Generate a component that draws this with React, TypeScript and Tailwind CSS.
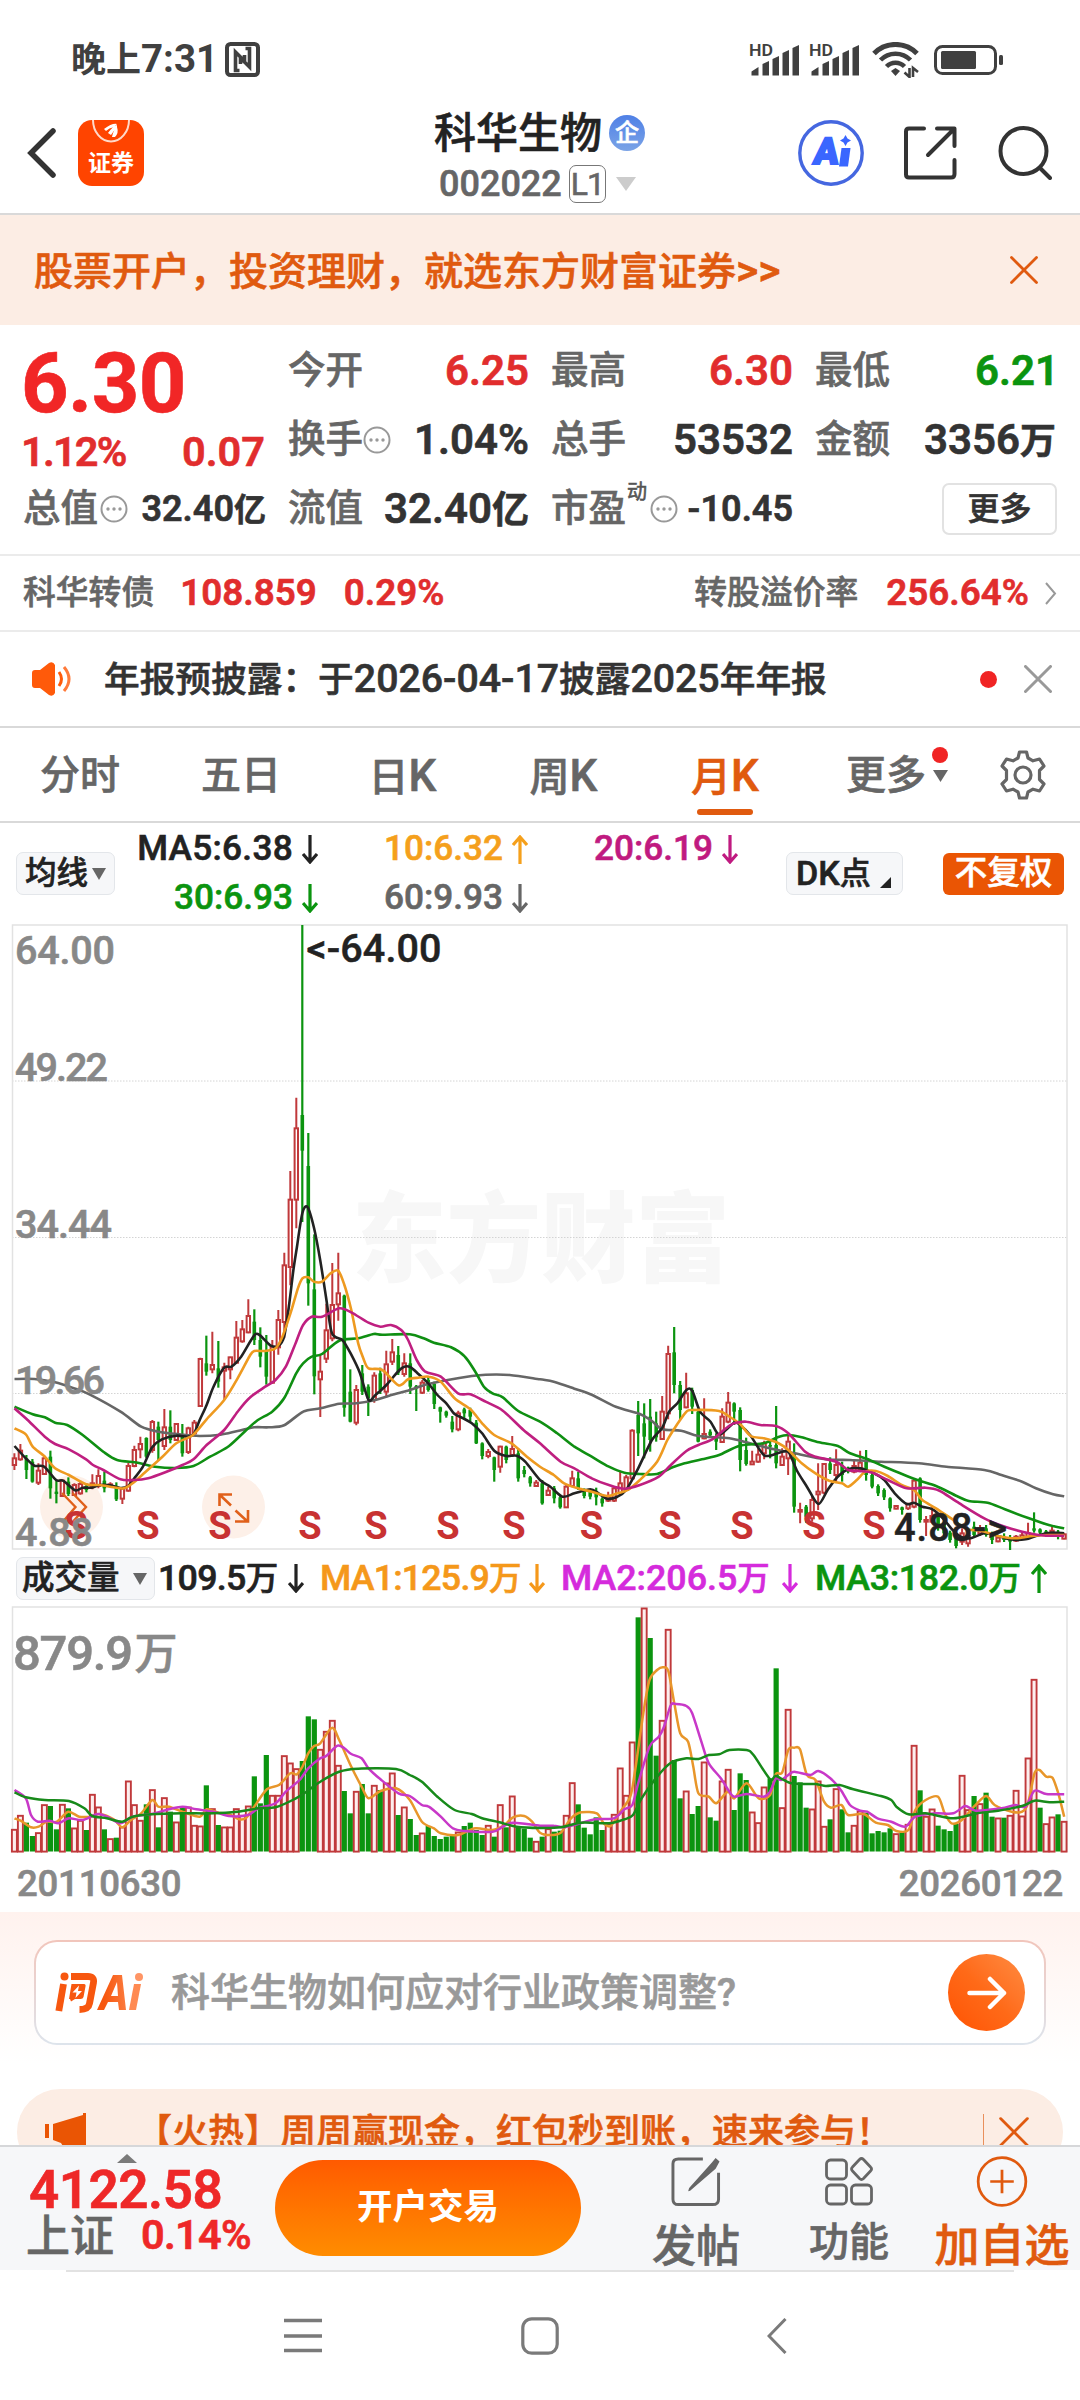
import type { ReactNode } from "react";

type Point = [number, number];
// [direction, high, body top, body bottom, low], prices in thirds of a pixel
type Candle = [1 | 0, number, number, number, number];

const STEP = 5.998;
const FIRST_X = 14.4;
const FRAME = "#e2e2e2";
const UP = "#c0393b";
const DOWN = "#0b940f";

const EARLY: Candle[] = [
  [1, 640, 655, 675, 690], [1, 612, 632, 658, 662], [0, 645, 655, 690, 717], [0, 657, 665, 725, 728],
  [1, 670, 692, 728, 735], [1, 647, 655, 702, 705], [0, 632, 650, 745, 776], [0, 720, 755, 762, 790],
  [1, 718, 722, 768, 770], [0, 712, 725, 762, 768], [1, 730, 735, 765, 768], [1, 722, 732, 760, 764],
  [0, 730, 738, 750, 757], [1, 703, 730, 740, 748], [1, 688, 708, 738, 745], [0, 695, 722, 745, 757],
  [1, 727, 733, 735, 738], [0, 727, 738, 778, 783], [1, 742, 746, 776, 792], [1, 668, 678, 752, 755],
  [1, 617, 630, 678, 682], [1, 590, 612, 628, 655], [0, 592, 594, 650, 654], [1, 540, 546, 630, 638],
  [0, 545, 560, 600, 660], [1, 507, 562, 618, 630], [0, 511, 560, 600, 610], [1, 550, 552, 600, 602],
  [0, 552, 590, 640, 650], [1, 560, 565, 636, 642], [1, 540, 548, 580, 584], [1, 353, 357, 498, 500],
  [0, 287, 370, 395, 407], [1, 275, 375, 388, 400], [0, 303, 385, 425, 443], [1, 368, 382, 392, 480],
  [1, 350, 352, 388, 418], [1, 243, 293, 368, 372], [1, 240, 268, 304, 308], [1, 178, 228, 277, 280],
  [0, 208, 245, 300, 315], [0, 262, 300, 350, 382], [0, 285, 330, 410, 434], [1, 300, 320, 428, 432],
  [1, 210, 240, 322, 344], [1, 38, 76, 246, 295], [1, -207, -121, 81, 136], [1, -427, -335, -121, -35],
  [0, -945, -375, -268, -54], [0, -321, -222, 130, 197], [0, -17, 148, 409, 463], [1, 344, 395, 418, 531],
  [1, 191, 271, 356, 369], [1, 69, 195, 295, 304], [1, 38, 160, 193, 242], [0, 164, 167, 503, 530],
  [0, 388, 455, 545, 547], [1, 435, 450, 548, 556], [0, 375, 400, 455, 465], [0, 433, 440, 475, 528],
  [1, 397, 407, 480, 488], [0, 383, 400, 450, 462], [1, 332, 373, 455, 472], [1, 297, 337, 365, 375],
  [0, 318, 345, 398, 405], [1, 340, 370, 402, 410], [0, 340, 370, 440, 462], [0, 435, 438, 445, 513],
  [1, 420, 428, 458, 462], [0, 408, 420, 450, 455], [0, 425, 432, 492, 507], [0, 500, 502, 515, 548],
  [0, 512, 515, 527, 533], [0, 528, 545, 568, 577], [1, 512, 520, 568, 574], [0, 503, 508, 520, 538],
  [0, 503, 510, 530, 545], [0, 540, 548, 610, 612], [0, 607, 610, 648, 658], [1, 627, 636, 648, 655],
  [0, 650, 652, 690, 725], [1, 617, 620, 680, 698], [0, 617, 620, 660, 670], [1, 588, 627, 645, 650],
  [0, 625, 640, 715, 725], [0, 678, 690, 702, 712], [0, 708, 712, 730, 740], [1, 720, 728, 738, 740],
];

const LATE: Candle[] = [
  [0, 960, 970, 1030, 1034], [1, 980, 992, 1005, 1008], [0, 978, 985, 1015, 1030], [0, 1005, 1012, 1042, 1046],
  [1, 972, 980, 1042, 1044], [1, 932, 955, 978, 982], [0, 935, 955, 985, 990], [0, 985, 990, 1008, 1015],
  [0, 988, 992, 1010, 1018], [0, 983, 995, 1012, 1036], [0, 1012, 1016, 1030, 1040], [1, 995, 1010, 1022, 1026],
  [1, 980, 985, 1022, 1026], [1, 932, 970, 1000, 1004], [1, 945, 952, 990, 993], [1, 808, 812, 955, 960],
  [0, 723, 765, 820, 888], [0, 730, 790, 830, 895], [0, 717, 770, 840, 875], [0, 755, 790, 832, 845],
  [1, 708, 755, 837, 840], [1, 557, 582, 760, 778], [0, 501, 577, 675, 700], [0, 663, 675, 750, 777],
  [1, 638, 700, 742, 745], [0, 683, 690, 740, 762], [0, 750, 755, 845, 847], [1, 715, 822, 835, 838],
  [0, 808, 815, 826, 832], [0, 820, 828, 845, 870], [1, 745, 770, 846, 848], [1, 696, 728, 785, 790],
  [0, 727, 730, 755, 795], [0, 742, 750, 900, 934], [0, 833, 870, 912, 917], [1, 872, 905, 913, 915],
  [1, 865, 884, 905, 908], [1, 842, 850, 880, 898], [0, 845, 855, 860, 895], [0, 738, 855, 910, 925],
  [1, 865, 890, 915, 918], [1, 822, 845, 895, 945], [0, 850, 880, 1040, 1058], [1, 1028, 1050, 1055, 1090],
  [0, 1035, 1040, 1070, 1088], [1, 1008, 1020, 1075, 1085], [1, 910, 995, 1003, 1050], [1, 910, 912, 998, 1003],
  [0, 892, 910, 930, 942], [1, 868, 915, 945, 968], [0, 905, 915, 945, 965], [0, 920, 925, 935, 940],
  [1, 898, 918, 935, 940], [1, 872, 908, 930, 935], [0, 870, 905, 945, 962], [0, 938, 945, 980, 985],
  [0, 973, 978, 1000, 1008], [0, 985, 990, 1012, 1020], [0, 1012, 1015, 1045, 1055], [1, 1036, 1038, 1046, 1048],
  [0, 1040, 1042, 1050, 1064], [1, 1028, 1032, 1045, 1050], [1, 955, 962, 1040, 1045], [0, 952, 955, 1080, 1088],
  [1, 1068, 1080, 1085, 1128], [1, 1040, 1068, 1085, 1090], [0, 1060, 1068, 1105, 1112], [0, 1082, 1088, 1120, 1128],
  [0, 1112, 1118, 1140, 1148], [0, 1125, 1130, 1158, 1165], [1, 1105, 1120, 1145, 1155], [1, 1120, 1128, 1150, 1160],
  [0, 1085, 1100, 1125, 1132], [1, 1095, 1105, 1120, 1128], [0, 1095, 1105, 1125, 1130], [0, 1115, 1120, 1140, 1152],
  [1, 1130, 1133, 1144, 1147], [0, 1120, 1130, 1140, 1146], [0, 1125, 1132, 1145, 1170], [1, 1125, 1130, 1142, 1146],
  [1, 1118, 1126, 1135, 1140], [1, 1088, 1120, 1130, 1135], [0, 1057, 1105, 1112, 1118], [0, 1105, 1108, 1118, 1125],
  [0, 1110, 1114, 1124, 1130], [1, 1100, 1112, 1122, 1128], [0, 1110, 1115, 1130, 1138], [1, 1120, 1123, 1136, 1138],
];

// the late half is measured from a baseline 80px higher
const CANDLES: Candle[] = [
  ...EARLY,
  ...LATE.map(([d, h, t, b, l]): Candle => [d, h - 240, t - 240, b - 240, l - 240]),
];

const VOLUMES = [
  867, 825, 848, 888, 877, 793, 798, 868, 792, 805, 863, 840, 870, 762, 800, 868, 895, 893, 860, 722, 793, 840,
  793, 748, 862, 772, 815, 845, 802, 800, 855, 857, 736, 805, 855, 860, 860, 805, 825, 797, 709, 790, 645, 765,
  765, 646, 668, 685, 663, 529, 538, 627, 573, 540, 675, 753, 820, 753, 732, 820, 735, 750, 728, 698, 825, 800,
  837, 885, 878, 858, 888, 897, 890, 885, 875, 858, 848, 870, 885, 855, 890, 793, 862, 767, 862, 866, 893, 903,
  890, 865, 875, 872, 825, 727, 793, 863, 883, 832, 870, 850, 822, 683, 765, 605, 232, 203, 294, 647, 540, 267,
  660, 775, 752, 822, 798, 665, 832, 842, 722, 687, 810, 700, 720, 815, 847, 740, 715, 385, 802, 507, 708, 727,
  803, 806, 722, 858, 838, 745, 808, 877, 855, 812, 818, 880, 873, 877, 865, 880, 873, 852, 615, 751, 828, 806,
  857, 868, 873, 852, 705, 808, 768, 790, 758, 830, 833, 833, 825, 750, 827, 653, 417, 803, 850, 830, 823, 843,
];
const VOLUME_FLIPPED = new Set([105, 131, 166, 170, 172]);

const join = (left: Point[], right: Point[]): Point[] => [
  ...left,
  ...right.map(([x, y]): Point => [x + 1568, y]),
];
const raise = (points: Point[]): Point[] => points.map(([x, y]) => [x, y - 240]);

const MA_LINES: { color: string; points: Point[] }[] = [
  {
    color: "#666666",
    points: join(
      [[42, 417], [100, 417], [160, 427], [210, 443], [260, 463], [350, 515], [410, 560], [460, 575], [520, 583], [580, 588], [640, 584], [690, 573], [738, 562], [780, 562], [825, 556], [880, 515], [930, 505], [985, 491], [1035, 490], [1090, 480], [1130, 467], [1180, 453], [1240, 433], [1300, 420], [1370, 408], [1410, 404], [1480, 405]],
      raise([[0, 658], [40, 665], [100, 686], [150, 704], [220, 740], [290, 762], [325, 783], [355, 808], [410, 812], [460, 828], [550, 835], [610, 850], [680, 868], [740, 880], [830, 898], [900, 900], [990, 905], [1100, 910], [1180, 920], [1290, 930], [1340, 945], [1400, 965], [1440, 985], [1490, 1003], [1522, 1009]]),
    ),
  },
  {
    color: "#0f8f12",
    points: join(
      [[42, 500], [95, 523], [130, 532], [160, 548], [195, 555], [240, 585], [300, 635], [340, 660], [400, 668], [450, 680], [510, 684], [562, 678], [610, 650], [660, 622], [700, 585], [745, 543], [790, 515], [825, 475], [860, 400], [880, 370], [905, 350], [935, 342], [985, 302], [1040, 295], [1085, 282], [1110, 284], [1190, 283], [1230, 295], [1260, 308], [1310, 322], [1350, 350], [1380, 395], [1405, 440], [1430, 460], [1460, 472], [1505, 513]],
      raise([[0, 785], [50, 820], [100, 860], [150, 890], [200, 920], [245, 938], [290, 942], [340, 942], [385, 922], [420, 910], [470, 898], [520, 885], [580, 857], [650, 850], [690, 832], [721, 825], [760, 832], [810, 847], [865, 858], [900, 880], [950, 897], [1000, 920], [1090, 958], [1150, 978], [1210, 1008], [1245, 1023], [1300, 1028], [1350, 1048], [1420, 1075], [1480, 1096], [1522, 1105]]),
    ),
  },
  {
    color: "#222222",
    points: join(
      [[42, 618], [75, 655], [100, 677], [128, 680], [163, 720], [183, 722], [218, 751], [240, 743], [265, 743], [290, 735], [320, 736], [350, 744], [372, 738], [390, 715], [415, 680], [442, 622], [470, 598], [512, 587], [545, 590], [562, 583], [580, 540], [600, 495], [620, 440], [651, 383], [672, 380], [700, 350], [738, 286], [755, 286], [785, 316], [808, 318], [825, 290], [840, 190], [852, 90], [862, 22], [878, -81], [893, -99], [912, -35], [930, 62], [947, 173], [964, 280], [995, 301], [1020, 344], [1045, 399], [1070, 479], [1090, 465], [1122, 435], [1157, 393], [1174, 380], [1191, 381], [1215, 402], [1245, 432], [1270, 465], [1296, 490], [1320, 522], [1345, 535], [1370, 550], [1400, 580], [1435, 632], [1470, 648], [1500, 647], [1525, 665]],
      raise([[0, 960], [30, 980], [65, 1010], [100, 1000], [146, 988], [170, 1000], [195, 1016], [225, 1010], [250, 990], [285, 925], [325, 840], [355, 803], [375, 755], [400, 728], [425, 690], [442, 692], [465, 755], [495, 785], [515, 820], [529, 820], [564, 788], [581, 795], [610, 825], [651, 886], [690, 880], [721, 875], [745, 930], [775, 980], [808, 1032], [835, 990], [862, 953], [895, 928], [930, 925], [970, 940], [1000, 960], [1030, 1000], [1065, 1032], [1086, 1028], [1110, 1040], [1140, 1048], [1170, 1075], [1200, 1112], [1225, 1132], [1250, 1135], [1290, 1120], [1320, 1125], [1365, 1138], [1410, 1138], [1440, 1128], [1480, 1118], [1522, 1120]]),
    ),
  },
  {
    color: "#ee9a20",
    points: join(
      [[42, 565], [75, 583], [95, 620], [128, 648], [160, 685], [200, 705], [250, 733], [290, 735], [330, 742], [360, 745], [385, 730], [420, 698], [470, 652], [512, 610], [560, 585], [600, 538], [651, 480], [690, 415], [725, 348], [738, 333], [770, 333], [800, 325], [820, 290], [845, 215], [865, 145], [878, 115], [895, 112], [912, 125], [935, 125], [960, 100], [982, 92], [1000, 135], [1020, 210], [1040, 310], [1055, 355], [1070, 385], [1110, 390], [1157, 436], [1185, 418], [1215, 413], [1245, 410], [1280, 425], [1320, 475], [1366, 508], [1400, 550], [1435, 585], [1485, 610], [1530, 650]],
      raise([[0, 920], [40, 945], [70, 970], [110, 985], [150, 995], [195, 1008], [225, 1000], [255, 990], [290, 960], [340, 905], [370, 840], [400, 790], [425, 755], [442, 750], [520, 753], [550, 770], [581, 792], [612, 828], [650, 835], [690, 848], [721, 870], [760, 910], [800, 940], [840, 962], [877, 970], [895, 980], [920, 960], [945, 935], [975, 933], [1010, 948], [1050, 975], [1086, 990], [1110, 1020], [1150, 1045], [1200, 1080], [1240, 1108], [1280, 1112], [1330, 1128], [1380, 1135], [1430, 1128], [1480, 1125], [1522, 1125]]),
    ),
  },
  {
    color: "#bf1f80",
    points: join(
      [[42, 505], [80, 540], [130, 590], [160, 612], [200, 628], [250, 658], [270, 675], [300, 690], [350, 718], [390, 720], [430, 715], [480, 697], [530, 675], [562, 658], [600, 615], [651, 570], [690, 515], [725, 473], [770, 440], [800, 420], [830, 380], [860, 305], [880, 255], [905, 230], [935, 230], [985, 205], [1020, 217], [1070, 248], [1105, 260], [1135, 255], [1165, 270], [1185, 300], [1210, 360], [1235, 395], [1280, 410], [1330, 460], [1366, 463], [1410, 485], [1460, 512], [1520, 570]],
      raise([[0, 850], [60, 905], [100, 925], [150, 955], [200, 975], [245, 986], [290, 975], [345, 950], [380, 915], [425, 873], [460, 855], [500, 838], [540, 805], [564, 790], [600, 785], [640, 795], [685, 798], [721, 820], [770, 875], [800, 890], [860, 905], [895, 930], [925, 933], [965, 938], [1010, 960], [1065, 985], [1120, 983], [1160, 992], [1210, 1025], [1290, 1075], [1350, 1100], [1420, 1120], [1470, 1127], [1522, 1127]]),
    ),
  },
];

const VOLUME_LINES: { color: string; points: Point[] }[] = [
  {
    color: "#e8962a",
    points: join(
      [[42, 835], [60, 842], [90, 862], [112, 860], [135, 845], [165, 845], [198, 815], [230, 830], [262, 830], [290, 822], [330, 838], [355, 862], [380, 840], [410, 820], [442, 780], [460, 800], [490, 800], [530, 815], [580, 830], [600, 808], [635, 818], [665, 822], [695, 838], [715, 833], [738, 800], [775, 748], [810, 735], [843, 700], [862, 703], [878, 680], [895, 640], [912, 618], [930, 610], [964, 563], [985, 600], [1020, 680], [1050, 740], [1070, 775], [1105, 753], [1150, 745], [1190, 780], [1225, 845], [1260, 865], [1280, 880], [1330, 885], [1380, 865], [1430, 870], [1465, 855], [1490, 832], [1522, 828], [1545, 845]],
      [[0, 878], [30, 885], [60, 878], [90, 835], [120, 817], [165, 820], [185, 850], [205, 858], [233, 815], [262, 770], [275, 700], [300, 520], [318, 420], [340, 390], [358, 382], [373, 395], [390, 490], [407, 580], [430, 605], [445, 680], [460, 760], [490, 770], [512, 790], [545, 755], [564, 775], [600, 730], [635, 775], [668, 765], [685, 702], [703, 698], [721, 630], [738, 623], [755, 628], [775, 705], [800, 720], [825, 785], [845, 803], [875, 795], [895, 825], [940, 822], [975, 848], [1010, 855], [1035, 873], [1070, 870], [1090, 810], [1120, 780], [1156, 770], [1175, 820], [1195, 850], [1225, 840], [1260, 800], [1295, 768], [1320, 795], [1370, 815], [1400, 815], [1417, 790], [1436, 700], [1450, 690], [1470, 710], [1488, 713], [1505, 760], [1522, 830]],
    ),
  },
  {
    color: "#c838c8",
    points: join(
      [[42, 750], [75, 775], [90, 825], [110, 845], [145, 842], [170, 850], [200, 835], [240, 840], [285, 822], [320, 835], [350, 850], [385, 830], [440, 822], [490, 808], [530, 800], [570, 808], [620, 815], [665, 828], [720, 825], [750, 805], [800, 790], [830, 755], [870, 720], [895, 685], [930, 655], [947, 648], [980, 617], [1000, 625], [1020, 642], [1050, 655], [1070, 685], [1105, 718], [1157, 760], [1190, 768], [1225, 795], [1245, 800], [1280, 830], [1315, 865], [1350, 873], [1430, 875], [1460, 860], [1490, 848]],
      [[0, 857], [40, 857], [70, 862], [110, 852], [160, 838], [215, 835], [245, 808], [268, 795], [285, 730], [318, 620], [345, 590], [360, 560], [380, 495], [395, 492], [425, 498], [442, 520], [470, 610], [490, 670], [525, 715], [550, 755], [564, 770], [600, 762], [650, 770], [668, 755], [685, 715], [700, 720], [721, 705], [738, 695], [785, 705], [808, 693], [843, 715], [875, 752], [900, 795], [930, 812], [950, 815], [980, 835], [1020, 845], [1060, 860], [1090, 830], [1150, 820], [1200, 820], [1235, 798], [1265, 812], [1340, 805], [1380, 795], [1410, 800], [1436, 752], [1470, 762], [1522, 763]],
    ),
  },
  {
    color: "#178a1a",
    points: join(
      [[42, 757], [75, 772], [130, 780], [200, 783], [245, 805], [268, 828], [310, 835], [355, 845], [385, 830], [440, 823], [530, 820], [620, 820], [690, 815], [750, 805], [800, 802], [850, 780], [890, 755], [930, 725], [985, 695], [1040, 686], [1150, 687], [1190, 705], [1225, 725], [1270, 770], [1320, 810], [1370, 822], [1400, 835], [1450, 847], [1500, 860]],
      [[0, 864], [60, 862], [120, 848], [200, 850], [245, 838], [270, 825], [295, 775], [340, 710], [380, 668], [425, 655], [460, 657], [490, 645], [520, 643], [550, 630], [600, 630], [620, 645], [668, 718], [685, 708], [730, 730], [800, 732], [830, 738], [870, 735], [910, 748], [990, 768], [1020, 780], [1035, 800], [1070, 823], [1120, 820], [1200, 835], [1270, 820], [1330, 812], [1400, 798], [1436, 782], [1480, 787], [1522, 785]],
    ),
  },
];

// Catmull-Rom spline through the samples, mapped to pixels
function smooth(samples: Point[], baseY: number) {
  const p = samples.map(([x, y]): Point => [x / 2.9037, baseY + y / 3]);
  let d = `M${p[0][0].toFixed(1)} ${p[0][1].toFixed(1)}`;
  for (let i = 0; i < p.length - 1; i++) {
    const a = p[i - 1] ?? p[i];
    const b = p[i];
    const c = p[i + 1];
    const e = p[i + 2] ?? c;
    const k = 7;
    d += `C${(b[0] + (c[0] - a[0]) / k).toFixed(1)} ${(b[1] + (c[1] - a[1]) / k).toFixed(1)} ${(c[0] - (e[0] - b[0]) / k).toFixed(1)} ${(c[1] - (e[1] - b[1]) / k).toFixed(1)} ${c[0].toFixed(1)} ${c[1].toFixed(1)}`;
  }
  return d;
}

// Latin runs are set slightly larger than the Han glyphs around them
function Mix({ children }: { children: string }) {
  return (
    <>
      {children.split(/([\x21-\x7e]+)/).map((part, i) =>
        i % 2 ? <span key={i} className="text-[1.1em] leading-none">{part}</span> : part,
      )}
    </>
  );
}

function Arrow({ up = false }: { up?: boolean }) {
  return (
    <svg width="16" height="29" viewBox="0 0 16 29" fill="none" stroke="currentColor" strokeWidth="3.200" className="shrink-0">
      {up ? <path d="M8 29V3M1 10l7-8 7 8" /> : <path d="M8 0v26M1 19l7 8 7-8" />}
    </svg>
  );
}

function Cross({ size, className, width = 3 }: { size: number; className: string; width?: number }) {
  return (
    <svg width={size} height={size} viewBox="0 0 28 28" fill="none" stroke="currentColor" strokeWidth={width} strokeLinecap="round" className={className}>
      <path d="M1.5 1.5l25 25M26.5 1.5l-25 25" />
    </svg>
  );
}

function Dots() {
  return (
    <svg width="28" height="28" viewBox="0 0 28 28" className="shrink-0">
      <circle cx="14" cy="14" r="12.5" fill="none" stroke="#999" strokeWidth="2" />
      <circle cx="8" cy="14" r="1.7" fill="#999" />
      <circle cx="14" cy="14" r="1.7" fill="#999" />
      <circle cx="20" cy="14" r="1.7" fill="#999" />
    </svg>
  );
}

function Signal() {
  return (
    <svg width="51" height="34" viewBox="0 0 51 34" fill="#404040">
      <text x="0" y="12.5" fontSize="16.5" fontWeight="600" textLength="24" lengthAdjust="spacingAndGlyphs">HD</text>
      <path d="M2.500 32.500v-4l7-4.500v8.500zM13.500 32.500V21l6.500-3v14.500zM23.500 32.500V16l6.500-3v19.500zM33.500 32.500V10l6.500-3v25.500zM43.500 32.500V5l6.500-3v30.500z" />
    </svg>
  );
}

function StatusBar() {
  return (
    <div className="flex h-[93px] items-center pt-[26px] pr-[76px] pl-[71px] text-[#404040]">
      <span className="text-[35px] font-bold leading-none [-webkit-text-stroke:0px]">
        <Mix>晚上7:31</Mix>
      </span>
      <svg width="35" height="35" viewBox="0 0 35 35" fill="none" stroke="currentColor" className="ml-[7px]">
        <rect x="2" y="2" width="31" height="31" rx="3.500" strokeWidth="4" />
        <path d="M14.500 28.500h-4V10q6 6 9 9v-6M20.500 6.500h4V25q-6-6-9-9v6" strokeWidth="3.600" />
      </svg>
      <div className="ml-auto flex items-center">
        <Signal />
        <span className="w-[9px]" />
        <Signal />
        <svg width="47" height="36" viewBox="0 0 47 36" fill="none" stroke="currentColor" className="ml-[12px]">
          <path d="M2 11.500a30 30 0 0 1 43 0" strokeWidth="5" />
          <path d="M8.500 18a21 21 0 0 1 30 0" strokeWidth="4.600" />
          <path d="M14.500 24.500a12.500 12.500 0 0 1 18 0" strokeWidth="4.500" />
          <path d="M19 29l4.500-3 4.500 3-4.500 5z" fill="currentColor" stroke="none" />
          <path d="M37.500 26v9l-5-4.500M41 35v-9l5 4" strokeWidth="2.600" />
        </svg>
        <svg width="70" height="30" viewBox="0 0 70 30" className="ml-[15px]">
          <rect x="1.500" y="1.500" width="60" height="27" rx="7" fill="none" stroke="#404040" strokeWidth="3" />
          <rect x="7" y="6" width="35" height="18" rx="1.500" fill="#404040" />
          <rect x="65" y="10" width="4" height="10" rx="1.500" fill="#404040" />
        </svg>
      </div>
    </div>
  );
}

function Header() {
  return (
    <header className="flex h-[122px] items-center border-b-2 border-[#d9d9d9] pr-[28px] pl-[26px]">
      <svg width="32" height="52" viewBox="0 0 32 52" fill="none" stroke="#333" strokeWidth="5.500" strokeLinecap="round" strokeLinejoin="miter">
        <path d="M27 4L5 26l22 22" />
      </svg>
      <div className="relative ml-[20px] flex size-[66px] items-end justify-center overflow-hidden rounded-[14px] bg-[#ff4400]">
        <svg width="66" height="66" viewBox="0 0 66 66" fill="none" className="absolute inset-0">
          <path d="M15 0a18 21.500 0 0 0 36 0" stroke="#ffd9c9" strokeWidth="2" />
          <path d="M26 9q8-6 13-5l-3 3q-5 1-8 4zM30 13q4-6 9-8v3q-4 3-6 7zM34 17q1-6 5-10 2 6-2 10z" fill="#fff" />
        </svg>
        <span className="mb-[8px] text-[23px] font-bold leading-[28px] text-white [-webkit-text-stroke:0px]">证券</span>
      </div>
      <div className="ml-[290px] flex w-[216px] flex-col pt-[6px]">
        <div className="flex items-center gap-[7px]">
          <span className="text-[42px] font-medium leading-[48px] text-[#222]">科华生物</span>
          <span className="-mt-[2px] flex size-[36px] items-center justify-center rounded-full bg-gradient-to-b from-[#4f80e6] to-[#7ba3e6] text-[24px] font-medium leading-none text-white">企</span>
        </div>
        <div className="mt-[7px] flex items-center pl-[5px] text-[36px] leading-none text-[#666]">
          <span className="font-medium">002022</span>
          <span className="ml-[7px] flex h-[38px] w-[37px] items-center justify-center rounded-[7px] border-[1.500px] border-[#777] text-[32px] tracking-[-1px]">L1</span>
          <svg width="20" height="14" viewBox="0 0 20 14" fill="#ccc" className="ml-[10px]">
            <path d="M0 0h20L10 14z" />
          </svg>
        </div>
      </div>
      <div className="ml-auto flex items-center">
        <svg width="66" height="66" viewBox="0 0 66 66">
          <circle cx="33" cy="33" r="31.200" fill="none" stroke="#4567e0" strokeWidth="3.400" />
          <text x="15" y="44.500" fontSize="37" fontWeight="900" fill="#3a66ff" stroke="#3a66ff" strokeWidth="2" transform="translate(5 0) skewX(-7)" textLength="25" lengthAdjust="spacingAndGlyphs">A</text>
          <path d="M43.500 28h9l-2.500 18.500h-9z" fill="#3a66ff" />
          <path d="M47.500 15l2 3.500 3.500 2-3.500 2-2 3.500-2-3.500-3.500-2 3.500-2z" fill="#3a66ff" />
        </svg>
        <svg width="54" height="54" viewBox="0 0 54 54" fill="none" stroke="#333" strokeWidth="4" strokeLinecap="round" strokeLinejoin="round" className="ml-[39px]">
          <path d="M21 2.500H6Q3 2.500 3 5.500v43Q3 51.500 6 51.500h42Q51.500 51.500 51.500 48V34M34 2.500h17.500V20M50 4L25 29" />
        </svg>
        <svg width="54" height="54" viewBox="0 0 54 54" fill="none" stroke="#333" strokeWidth="4" strokeLinecap="round" className="ml-[41px]">
          <circle cx="25.500" cy="25" r="23" />
          <path d="M42 42l10 10" />
        </svg>
      </div>
    </header>
  );
}

function Stat({ label, value, color = "text-[#333]", size = "text-[42px]", children }: { label: string; value: ReactNode; color?: string; size?: string; children?: ReactNode }) {
  return (
    <div className="flex h-[69px] items-center whitespace-nowrap leading-none">
      <span className="-ml-px text-[37.500px] font-medium text-[#666]">{label}</span>
      {children}
      <span className={`-mr-[2px] ml-auto font-semibold ${size} ${color}`}>{value}</span>
    </div>
  );
}

function Quote() {
  const red = "text-[#e12d2d]";
  return (
    <section className="h-[231px] border-b-2 border-[#ebebeb] px-[24px] pt-[11px]">
      <div className="grid grid-cols-[240px_238px_239px_238px] gap-x-[25px]">
        <div className="row-span-2 flex flex-col whitespace-nowrap leading-none">
          <div className="-ml-[3px] flex h-[94px] items-center text-[83px] font-bold tracking-[-0.500px] text-[#f12626]">6.30</div>
          <div className="flex h-[44px] items-center justify-between text-[41.500px] font-semibold text-[#e12d2d]">
            <span className="-ml-[3px] tracking-[-1.800px]">1.12%</span>
            <span className="-mr-px">0.07</span>
          </div>
        </div>
        <Stat label="今开" value="6.25" color={red} />
        <Stat label="最高" value="6.30" color={red} />
        <Stat label="最低" value="6.21" color="mr-[-5px] text-[#0b940f]" />
        <Stat label="换手" value="1.04%">
          <Dots />
        </Stat>
        <Stat label="总手" value="53532" />
        <Stat label="金额" value={<>3356<span className="text-[36px]">万</span></>} />
        <Stat label="总值" size="text-[36px]" value={<>32.40<span className="text-[32px]">亿</span></>}>
          <span className="ml-[2px] flex"><Dots /></span>
        </Stat>
        <Stat label="流值" value={<>32.40<span className="text-[37px]">亿</span></>} />
        <Stat label="市盈" size="text-[36px]" value="-10.45">
          <span className="-mt-[34px] ml-[1px] text-[20px] text-[#555]">动</span>
          <span className="ml-[3px] flex"><Dots /></span>
        </Stat>
        <div className="flex items-center justify-end">
          <div className="-mr-[3px] flex h-[52px] w-[115px] items-center justify-center rounded-[7px] border-2 border-[#e2e2e2] text-[32px] font-medium leading-none text-[#333]">更多</div>
        </div>
      </div>
    </section>
  );
}

function BondRow() {
  return (
    <div className="flex h-[76px] items-center whitespace-nowrap border-b-2 border-[#ebebeb] pr-[23px] pl-[23px] leading-none">
      <span className="text-[32.800px] font-medium text-[#666]">科华转债</span>
      <span className="ml-[26px] text-[36.800px] font-semibold text-[#e12d2d]">108.859</span>
      <span className="ml-[27px] text-[36.800px] font-semibold text-[#e12d2d]">0.29%</span>
      <span className="ml-auto text-[32.800px] font-medium text-[#666]">转股溢价率</span>
      <span className="ml-[28px] text-[36.800px] font-semibold text-[#e12d2d]">256.64%</span>
      <svg width="12" height="23" viewBox="0 0 12 23" fill="none" stroke="#999" strokeWidth="2" className="ml-[16px]">
        <path d="M1 1l9 10.500L1 22" />
      </svg>
    </div>
  );
}

function Notice() {
  return (
    <div className="flex h-[96px] items-center border-b-2 border-[#d9d9d9] pr-[28px] pl-[31px]">
      <svg width="42" height="34" viewBox="0 0 42 34" fill="none">
        <path d="M1 11q0-3 3-3h5l9-7q4-2 6 2v28q-2 4-6 2l-9-7H4q-3 0-3-3z" fill="#ff5a0a" />
        <path d="M28 10q5 7 0 14" stroke="#ff5a0a" strokeWidth="3" />
        <path d="M33 5q10 12 0 24" stroke="#ff7a3a" strokeWidth="3" />
      </svg>
      <span className="mt-px ml-[31px] whitespace-nowrap text-[35.700px] font-medium leading-none text-[#333]">
        <Mix>年报预披露：于2026-04-17披露2025年年报</Mix>
      </span>
      <span className="ml-auto size-[17px] rounded-full bg-[#f02424]" />
      <Cross size={28} width={3} className="ml-[27px] text-[#999]" />
    </div>
  );
}

const TABS = [
  { label: "分时", width: "w-[160px]" },
  { label: "五日", width: "w-[162px]" },
  { label: "日K", width: "w-[161px]" },
  { label: "周K", width: "w-[161px]" },
  { label: "月K", width: "w-[162px]", active: true },
];

function Tabs() {
  return (
    <nav className="flex h-[95px] items-center border-b-2 border-[#d9d9d9] text-[40px] font-medium leading-none text-[#666]">
      {TABS.map((tab) => (
        <div key={tab.label} className={`relative flex h-full items-center justify-center ${tab.width} ${tab.active ? "text-[#e05a0f]" : ""}`}>
          <span className="mt-[2px]"><Mix>{tab.label}</Mix></span>
          {tab.active && <span className="absolute bottom-[6px] h-[6px] w-[56px] rounded-full bg-[#e05a0f]" />}
        </div>
      ))}
      <div className="relative mt-[2px] ml-[40px] flex items-center">
        <span>更多</span>
        <svg width="15" height="12" viewBox="0 0 15 12" fill="#666" className="ml-[7px]">
          <path d="M0 0h15L7.500 12z" />
        </svg>
        <span className="absolute -top-[9px] right-0 size-[16px] rounded-full bg-[#f02424]" />
      </div>
      <svg width="48" height="50" viewBox="0 0 48 50" fill="none" stroke="#666" strokeWidth="3.200" strokeLinejoin="round" className="ml-[51px]">
        <path d="M20.500 2h7l1.500 6 5 2.800 6.500-1.800 4.500 7-4.500 4.500v9l4.500 4.500-4.500 7-6.500-1.800-5 2.800-1.500 6h-7l-1.500-6-5-2.800L7.500 41 3 34l4.500-4.500v-9L3 16l4.500-7 6.500 1.800L19 8z" />
        <circle cx="24" cy="25" r="8" />
      </svg>
    </nav>
  );
}

function Ma({ text, up, className }: { text: string; up?: boolean; className: string }) {
  return (
    <div className={`flex items-center justify-end gap-[9px] ${className}`}>
      <span>{text}</span>
      <Arrow up={up} />
    </div>
  );
}

function Averages() {
  return (
    <div className="flex h-[101px] items-center pr-[16px] pl-[16px]">
      <div className="flex h-[43px] w-[99px] items-center gap-[4px] rounded-[7px] border-[1.500px] border-[#e3e6ea] bg-[#f6f7f9] pl-[8px] text-[31.500px] font-medium leading-none whitespace-nowrap text-[#222]">
        均线
        <svg width="14" height="12" viewBox="0 0 14 12" fill="#666" className="shrink-0"><path d="M0 0h14L7 12z" /></svg>
      </div>
      <div className="grid grid-cols-[203px_210px_210px] grid-rows-[49px_49px] text-[35.200px] font-medium leading-none">
        <Ma text="MA5:6.38" className="tracking-[0.300px] text-[#222]" />
        <Ma text="10:6.32" up className="text-[#f5a01c]" />
        <Ma text="20:6.19" className="text-[#c01a80]" />
        <Ma text="30:6.93" className="text-[#0b940f]" />
        <Ma text="60:9.93" className="text-[#666]" />
      </div>
      <div className="ml-[48px] flex h-[43px] w-[117px] items-center rounded-[7px] border-[1.500px] border-[#e3e6ea] bg-[#f6f7f9] pl-[9px] text-[31px] font-medium leading-none whitespace-nowrap text-[#222]">
        <Mix>DK点</Mix>
        <svg width="11" height="11" viewBox="0 0 11 11" className="mt-[18px] ml-[9px] shrink-0"><path d="M11 0v11H0z" fill="#222" /></svg>
      </div>
      <div className="ml-auto flex h-[42px] w-[121px] items-center justify-center rounded-[6px] bg-[#ea5504] text-[32.500px] font-medium leading-none whitespace-nowrap text-white">不复权</div>
    </div>
  );
}

const AXIS: { label: string; y: number; width: number }[] = [
  { label: "64.00", y: 964, width: 98 },
  { label: "49.22", y: 1081, width: 91 },
  { label: "34.44", y: 1237.5, width: 95 },
  { label: "19.66", y: 1393.5, width: 88 },
  { label: "4.88", y: 1545.5, width: 76 },
];
const MARKS = [76, 148, 220, 310, 376, 448, 514, 591.5, 670, 742, 814, 874];

function PriceChart() {
  return (
    <svg width="1080" height="627" viewBox="0 924 1080 627" fill="none" className="block">
      <text x="352" y="1274" fontSize="98" fontWeight="900" fill="#f7f7f7" textLength="378" lengthAdjust="spacingAndGlyphs">东方财富</text>
      {[1081, 1237.5, 1393.5].map((y) => (
        <path key={y} d={`M12 ${y}H1067`} stroke="#d4d4d4" strokeDasharray="1.500 1.500" />
      ))}
      <rect x="12.500" y="925" width="1054.500" height="624" stroke={FRAME} strokeWidth="1.500" />
      <circle cx="71.500" cy="1507" r="31.500" fill="#fdf0e8" />
      <circle cx="233.500" cy="1507" r="31.500" fill="#fdf0e8" />
      {CANDLES.map(([up, high, top, bottom, low], i) => {
        const x = FIRST_X + i * STEP;
        const y = (v: number) => 1240 + v / 3;
        const height = Math.max((bottom - top) / 3, 1.5);
        return up ? (
          <g key={i} stroke={UP} strokeWidth="2">
            <path d={`M${x} ${y(high)}V${y(top)}M${x} ${y(bottom)}V${y(low)}`} />
            <rect x={x - 1.7} y={y(top)} width="3.400" height={height} fill="#fff" />
          </g>
        ) : (
          <g key={i}>
            <path d={`M${x} ${y(high)}V${y(low)}`} stroke={DOWN} strokeWidth="2.200" />
            <rect x={x - 1.8} y={y(top)} width="3.600" height={height} fill={DOWN} />
          </g>
        );
      })}
      {MA_LINES.map((line) => (
        <path key={line.color} d={smooth(line.points, 1240)} stroke={line.color} strokeWidth="2.600" strokeLinejoin="round" />
      ))}
      <path d="M62 1493l13.500 14-12 14M72.500 1493l13.500 14-12.500 14" stroke="#e0601a" strokeWidth="2.400" />
      <path d="M232 1494.500h-12.500V1506M220 1495l11 10.500M235 1521.500h13V1510M247 1521l-11.500-10.500" stroke="#e0601a" strokeWidth="2.600" />
      {MARKS.map((x) => (
        <text key={x} x={x} y="1538.500" fontSize="38" fontWeight="700" fill="#c83232" textAnchor="middle">S</text>
      ))}
      {AXIS.map((a) => (
        <text key={a.label} x="15" y={a.y} fontSize="39.500" fontWeight="500" fill="#888" stroke="#888" strokeWidth=".6" textLength={a.width + 2}>{a.label}</text>
      ))}
      <text x="306.500" y="961.500" fontSize="39.500" fontWeight="500" fill="#222" stroke="#222" strokeWidth=".5" textLength="135">&lt;-64.00</text>
      <text x="894" y="1541" fontSize="38" fontWeight="500" fill="#222" stroke="#222" strokeWidth=".5" textLength="113">4.88-&gt;</text>
    </svg>
  );
}

function VolumeHeader() {
  return (
    <div className="flex h-[55px] items-center pl-[16px] text-[32.500px] font-medium leading-none whitespace-nowrap">
      <div className="flex h-[43px] w-[139px] items-center justify-between rounded-[7px] border-[1.500px] border-[#e3e6ea] bg-[#f6f7f9] pr-[7px] pl-[5px] text-[32.500px] text-[#222]">
        成交量
        <svg width="14" height="12" viewBox="0 0 14 12" fill="#666"><path d="M0 0h14L7 12z" /></svg>
      </div>
      <div className="ml-[3px] flex w-[146px] items-center justify-between tracking-[-0.700px] text-[#222]"><span><Mix>109.5万</Mix></span><Arrow /></div>
      <div className="ml-[16px] flex w-[225px] items-center justify-between tracking-[-0.800px] text-[#f5981a]"><span><Mix>MA1:125.9万</Mix></span><Arrow /></div>
      <div className="ml-[16px] flex w-[237px] items-center justify-between text-[#d52bdc]"><span><Mix>MA2:206.5万</Mix></span><Arrow /></div>
      <div className="ml-[17px] flex w-[232px] items-center justify-between tracking-[-0.300px] text-[#0b940f]"><span><Mix>MA3:182.0万</Mix></span><Arrow up /></div>
    </div>
  );
}

function VolumeChart() {
  return (
    <svg width="1080" height="247" viewBox="0 1606 1080 247" fill="none" className="block">
      <path d="M12.500 1852V1607H1067v245" stroke={FRAME} strokeWidth="1.500" />
      <text x="13" y="1669.500" fontSize="49" fontWeight="500" fill="#888" stroke="#888" strokeWidth=".6" textLength="120">879.9</text>
      <text x="134.500" y="1669" fontSize="43" fontWeight="500" fill="#888" stroke="#888" strokeWidth=".6">万</text>
      {VOLUMES.map((v, i) => {
        const x = FIRST_X + i * STEP;
        const top = 1540 + v / 3;
        const up = (CANDLES[i][0] === 1) !== VOLUME_FLIPPED.has(i);
        return up ? (
          <rect key={i} x={x - 2.5} y={top + 0.8} width="5" height={1850.8 - top} fill="#fdeeee" stroke={UP} strokeWidth="1.900" />
        ) : (
          <rect key={i} x={x - 2.6} y={top} width="5.200" height={1851.5 - top} fill={DOWN} />
        );
      })}
      {VOLUME_LINES.map((line) => (
        <path key={line.color} d={smooth(line.points, 1540)} stroke={line.color} strokeWidth="2.500" strokeLinejoin="round" />
      ))}
    </svg>
  );
}

function AskAi() {
  return (
    <div className="mx-[34px] mt-[28px] rounded-[23px] bg-gradient-to-b from-[#f1c5bb] to-[#dde4ec] p-[2px]">
      <div className="flex h-[101px] items-center rounded-[21px] bg-white pr-[19px] pl-[19px]">
        <svg width="90" height="42" viewBox="0 0 90 42">
          <defs>
            <linearGradient id="ask" gradientUnits="userSpaceOnUse" x1="0" x2="90" y1="0" y2="0">
              <stop offset=".55" stopColor="#f7570f" />
              <stop offset="1" stopColor="#ff9a66" />
            </linearGradient>
          </defs>
          <g fill="none" stroke="#f7570f" strokeWidth="6.800" strokeLinejoin="round">
            <path d="M8.500 12L3.800 39" />
            <path d="M16 4.500h17q6.500 0 5.500 6l-4 21q-1 6-10 6" />
          </g>
          <circle cx="9.500" cy="4.500" r="4" fill="#f7570f" />
          <path d="M16.500 12h12.500q2 0 1.500 2.500L28.500 25q-.5 2-3 2H20l-4 2.500-1-2.500h-1z" fill="#f7570f" />
          <path d="M24 13.500l-6.500 7h4l-1 5.500 6.500-7h-4z" fill="#fff" />
          <path d="M42 38L58 3h9l4 35h-7l-1-8H53l-4 8zM56 24h7l-1-14z" fill="url(#ask)" fillRule="evenodd" />
          <path d="M79 12h7l-5 26h-7z" fill="#ff8a52" />
          <circle cx="84" cy="5" r="4" fill="#ff9565" />
        </svg>
        <span className="ml-[26px] pt-[2px] text-[39px] leading-none whitespace-nowrap text-[#999] font-medium">科华生物如何应对行业政策调整?</span>
        <div className="ml-auto flex size-[77px] items-center justify-center rounded-full bg-gradient-to-bl from-[#ff8c40] via-[#ff6a18] to-[#ff5200]">
          <svg width="40" height="34" viewBox="0 0 40 34" fill="none" stroke="#fff" strokeWidth="4.500" strokeLinecap="round" strokeLinejoin="round">
            <path d="M2.500 17H37M23 3l14 14-14 14" />
          </svg>
        </div>
      </div>
    </div>
  );
}

function Promo() {
  return (
    <div className="mx-[17px] mt-[44px] h-[57px] overflow-hidden">
      <div className="flex h-[86px] items-center rounded-[43px] bg-[#fcede4] pr-[34px] pl-[28px] text-[#e05a0f]">
        <svg width="42" height="44" viewBox="0 0 42 44" fill="#ea5504">
          <path d="M0 14h4v14H0zM8 14L38 5V3h3v40h-3l-11-6q-6 5-11-4l-8-3z" />
        </svg>
        <span className="mt-[2px] ml-[49px] text-[36px] font-medium leading-none whitespace-nowrap">【火热】周周赢现金，红包秒到账，速来参与！</span>
        <span className="ml-auto mr-[15px] h-[36px] w-[1.500px] bg-[#e9905c]" />
        <Cross size={30} width={2.6} className="" />
      </div>
    </div>
  );
}

function BottomBar() {
  return (
    <footer className="flex h-[125px] border-t-2 border-[#d6d7d9] bg-[#f6f7f9]">
      <div className="w-[275px] pl-[26px] leading-none">
        <svg width="20" height="9" viewBox="0 0 20 9" className="ml-[91px] mt-[7px]" fill="#7a7a7a">
          <path d="M10 0l10 9H0z" />
        </svg>
        <div className="mt-[3px] ml-[3px] text-[53px] font-semibold leading-[48px] tracking-[-0.500px] text-[#ee2828]">4122.58</div>
        <div className="flex h-[48px] items-center">
          <span className="-mt-[3px] text-[44px] font-medium text-[#666]">上证</span>
          <span className="-mt-[7px] ml-[27px] text-[41.500px] font-semibold tracking-[-0.700px] text-[#ee2828]">0.14%</span>
        </div>
      </div>
      <div className="mt-[13px] flex h-[96px] w-[306px] items-center justify-center rounded-full bg-gradient-to-b from-[#ff5a00] to-[#ff8c00] text-[35.500px] font-bold leading-none text-white [-webkit-text-stroke:0px]">
        开户交易
      </div>
      <div className="ml-[56px] flex w-[118px] flex-col items-center text-[#666]">
        <svg width="52" height="52" viewBox="0 0 52 52" fill="none" stroke="currentColor" strokeWidth="3" className="mt-[9px]">
          <path d="M33 3H8Q2.500 3 2.500 8v36Q2.500 49.500 8 49.500h35Q49 49.500 49 44V17" />
          <path d="M46 2l4 3.500-4 7.500-26 22.500-2 .500 1-3.500L42 7z" fill="currentColor" stroke="none" />
        </svg>
        <span className="mt-[17px] text-[44px] font-medium leading-[46px] whitespace-nowrap">发帖</span>
      </div>
      <div className="ml-[35px] flex w-[118px] flex-col items-center text-[#666]">
        <svg width="48" height="50" viewBox="0 0 48 50" fill="none" stroke="currentColor" strokeWidth="2.800" className="mt-[10px]">
          <rect x="1.500" y="3" width="20" height="19" rx="4" />
          <rect x="1.500" y="28" width="20" height="19" rx="4" />
          <rect x="26.500" y="28" width="20" height="19" rx="4" />
          <path d="M34.500 2.500q2-2 4 0l7 7.500q2 2 0 4l-7 7.500q-2 2-4 0l-7-7.500q-2-2 0-4z" />
        </svg>
        <span className="mt-[13px] text-[40px] font-medium leading-[46px] whitespace-nowrap">功能</span>
      </div>
      <div className="ml-[23px] flex w-[142px] flex-col items-center text-[#e05a0f]">
        <svg width="52" height="52" viewBox="0 0 52 52" fill="none" stroke="currentColor" strokeWidth="2.800" className="mt-[9px]">
          <circle cx="26" cy="26" r="24.300" />
          <path d="M14 26h24M26 14v24" />
        </svg>
        <span className="mt-[17px] text-[45px] font-medium leading-[46px] whitespace-nowrap">加自选</span>
      </div>
    </footer>
  );
}

function SystemNav() {
  return (
    <div className="h-[130px] px-[66px]">
      <div className="h-[2px] bg-[#e2e2e2]" />
      <div className="flex items-center pt-[45px] pl-[218px] text-[#7a7a7a]">
        <svg width="38" height="38" viewBox="0 0 38 38" fill="none" stroke="currentColor" strokeWidth="3.500">
          <path d="M0 3.500h38M0 19h38M0 33.500h38" />
        </svg>
        <svg width="38" height="38" viewBox="0 0 38 38" fill="none" stroke="currentColor" strokeWidth="3.200" className="ml-[199px]">
          <rect x="1.800" y="1.800" width="34.400" height="34.400" rx="9" />
        </svg>
        <svg width="20" height="36" viewBox="0 0 20 36" fill="none" stroke="currentColor" strokeWidth="3" className="ml-[208px]">
          <path d="M18.500 1L2 18l16.500 17" />
        </svg>
      </div>
    </div>
  );
}

function App() {
  return (
    <div className="h-[2400px] w-[1080px] overflow-hidden bg-white font-[Roboto,Noto_Sans_CJK_SC,sans-serif] [-webkit-text-stroke:0.6px]">
      <StatusBar />
      <Header />
      <div className="flex h-[110px] items-center bg-[#fcede4] pr-[42px] pl-[34px] text-[#e05a0f]">
        <span className="text-[39px] font-medium leading-none whitespace-nowrap">
          <Mix>{"股票开户，投资理财，就选东方财富证券>>"}</Mix>
        </span>
        <Cross size={28} className="ml-auto" width={2.8} />
      </div>
      <Quote />
      <BondRow />
      <Notice />
      <Tabs />
      <Averages />
      <PriceChart />
      <VolumeHeader />
      <VolumeChart />
      <div className="flex h-[59px] items-center justify-between pt-[3px] pr-[17px] pl-[17px] text-[36.500px] font-medium leading-none tracking-[-0.200px] text-[#888]">
        <span>20110630</span>
        <span>20260122</span>
      </div>
      <div className="h-[233px] overflow-hidden bg-gradient-to-b from-[#fff2ee] to-white to-65%">
        <AskAi />
        <Promo />
      </div>
      <BottomBar />
      <SystemNav />
    </div>
  );
}

export default App;
